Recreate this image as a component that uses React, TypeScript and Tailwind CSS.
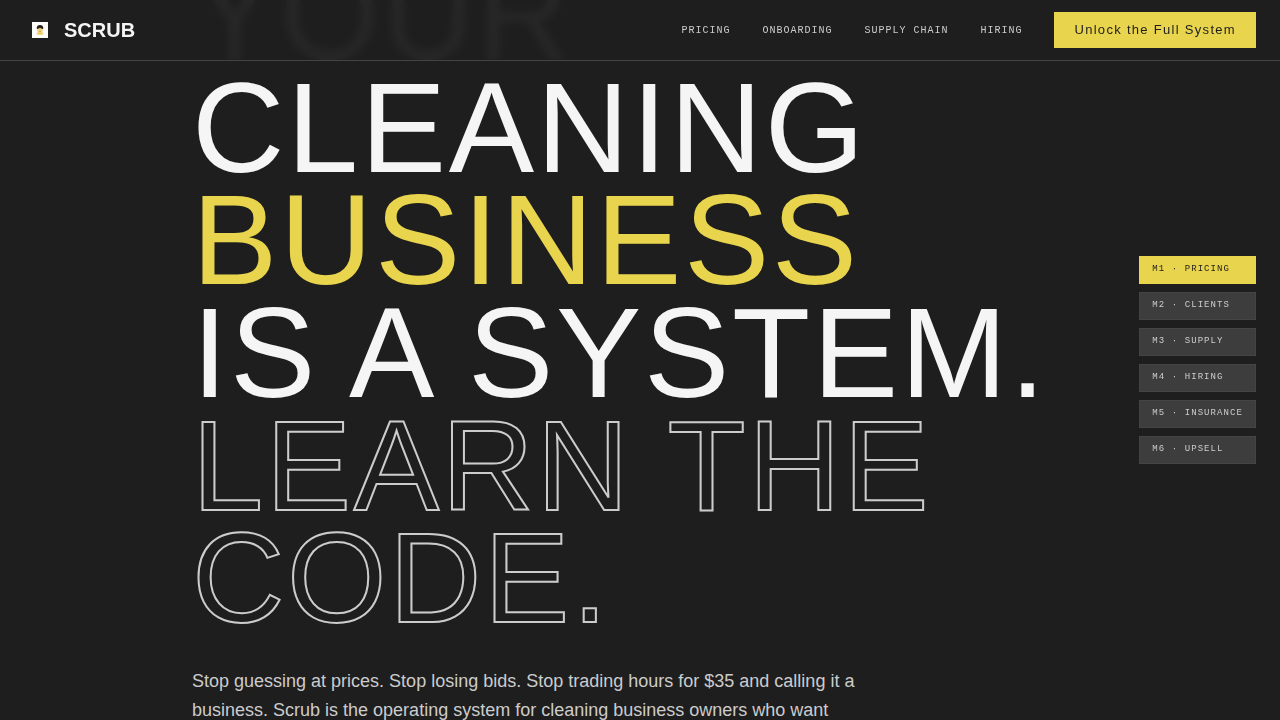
import React from 'react';

interface NavLink {
  label: string;
  href: string;
}

const NAV_LINKS: NavLink[] = [
  { label: 'PRICING', href: '#pricing' },
  { label: 'ONBOARDING', href: '#onboarding' },
  { label: 'SUPPLY CHAIN', href: '#supply-chain' },
  { label: 'HIRING', href: '#hiring' },
];

const MODULES: NavLink[] = [
  { label: 'M1 · PRICING', href: '#m1' },
  { label: 'M2 · CLIENTS', href: '#m2' },
  { label: 'M3 · SUPPLY', href: '#m3' },
  { label: 'M4 · HIRING', href: '#m4' },
  { label: 'M5 · INSURANCE', href: '#m5' },
  { label: 'M6 · UPSELL', href: '#m6' },
];

const Logo: React.FC = () => (
  <svg viewBox="0 0 32 32" className="size-8" aria-hidden="true">
    <rect x="8" y="8" width="16" height="16" fill="#fdfdfb" />
    <path d="M12.8 20.8 Q12.6 17.4 16 17.4 Q19.4 17.4 19.2 20.8 Z" fill="#ecd06a" />
    <circle cx="16" cy="16" r="2.8" fill="#f0d27c" />
    <path d="M12.7 14.8 Q12.4 11 16 10.9 Q19.6 11 19.3 14.8 L18 15 Q17.6 13.9 16 13.9 Q14.4 13.9 14 15 Z" fill="#26231c" />
    <path d="M15 17.4 H17" stroke="#a98a3a" strokeWidth="0.6" />
  </svg>
);

const Header: React.FC = () => (
  <header className="fixed inset-x-0 top-0 z-20 flex items-center justify-between border-b border-[#444444] bg-[#1e1e1e]/96 px-6 py-3 backdrop-blur-xs">
    <a href="#top" className="flex items-center gap-2 text-xl font-bold leading-8 text-[#f5f5f5]">
      <Logo />
      SCRUB
    </a>
    <nav className="flex items-center gap-8">
      {NAV_LINKS.map((link) => (
        <a
          key={link.href}
          href={link.href}
          className="font-['Liberation_Mono',monospace] text-[10px] leading-[15px] tracking-widest text-[#cccccc]"
        >
          {link.label}
        </a>
      ))}
      <button type="button" className="h-9 bg-[#e8d44d] px-5 text-[13px] tracking-widest text-[#1e1e1e]">
        Unlock the Full System
      </button>
    </nav>
  </header>
);

const ModuleNav: React.FC = () => (
  <aside className="fixed right-6 top-1/2 z-10 flex -translate-y-1/2 flex-col gap-2">
    {MODULES.map((mod, index) => (
      <a
        key={mod.href}
        href={mod.href}
        className={`border px-3 pb-2 pt-1.5 font-['Liberation_Mono',monospace] text-[9px] leading-3 tracking-[0.12em] ${
          index === 0
            ? 'border-[#e8d44d] bg-[#e8d44d] text-[#1e1e1e]'
            : 'border-[#444444] bg-[#3d3d3d] text-[#cccccc]'
        }`}
      >
        {mod.label}
      </a>
    ))}
  </aside>
);

export default function App() {
  return (
    <div
      id="top"
      className="min-h-screen overflow-hidden bg-[#1e1e1e] font-['Liberation_Sans',Arial,sans-serif] text-[#f5f5f5]"
    >
      <Header />
      <ModuleNav />
      {/* First headline line runs underneath the header */}
      <main className="mx-auto -mt-[41px] max-w-4xl">
        <h1 className="text-[128px] leading-[0.88] tracking-[0.02em]">
          <span className="block">YOUR</span>
          <span className="block">CLEANING</span>
          <span className="block text-[#e8d44d]">BUSINESS</span>
          <span className="block whitespace-nowrap">IS A SYSTEM.</span>
          <span className="block text-transparent [-webkit-text-stroke:2px_#cccccc]">LEARN THE CODE.</span>
        </h1>
        <p className="mt-8 max-w-[680px] text-lg leading-[29px] text-[#cccccc]">
          Stop guessing at prices. Stop losing bids. Stop trading hours for $35 and calling it a business. Scrub is the
          operating system for cleaning business owners who want
        </p>
      </main>
    </div>
  );
}
